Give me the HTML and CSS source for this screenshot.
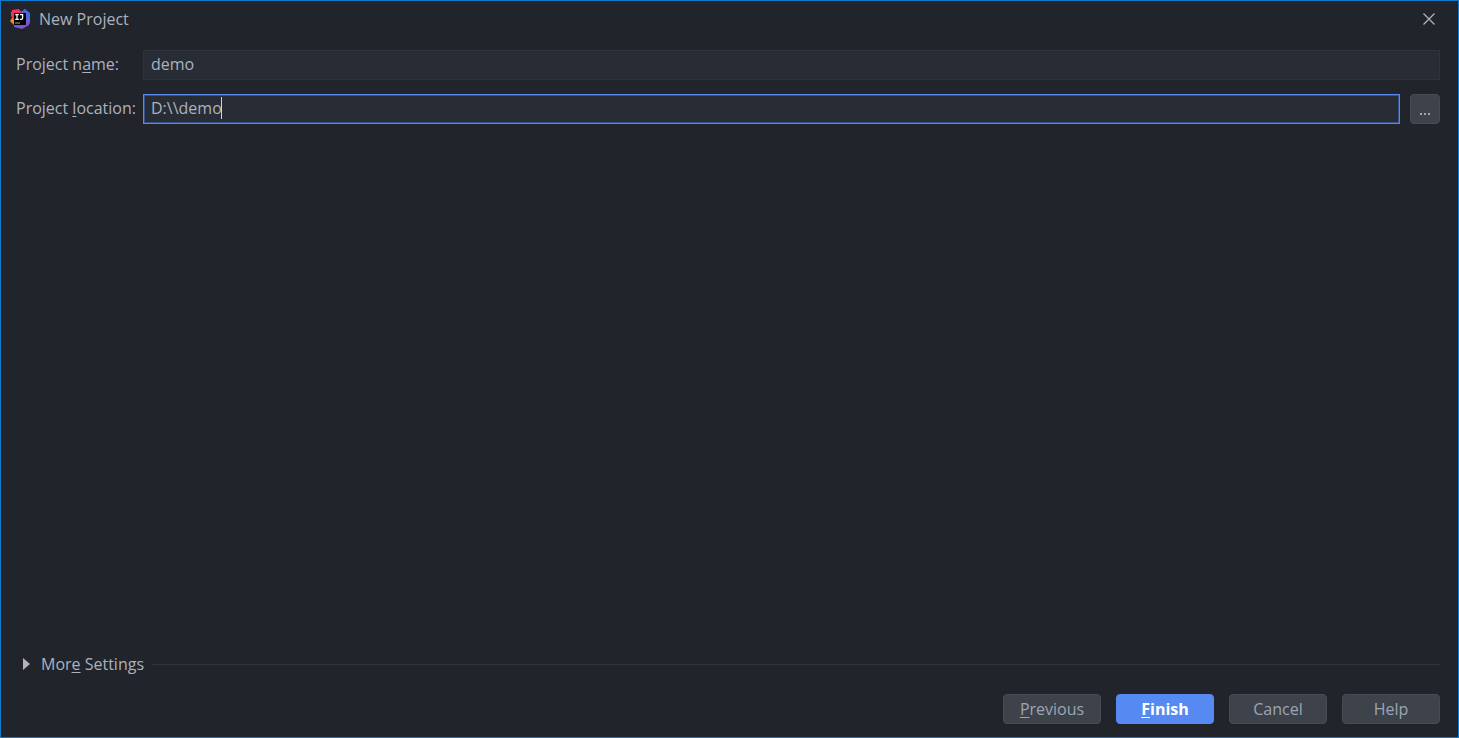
FILE: index.html
```html
<!DOCTYPE html>
<html lang="en">
<head>
    <meta charset="UTF-8">
    <meta name="viewport" content="width=device-width, initial-scale=1.0">
    <title>New Project</title>
    <link rel="stylesheet" href="styles.css">
</head>
<body>
    <div class="dialog">
        <!-- Title bar -->
        <header class="titlebar">
            <svg class="logo" viewBox="0 0 20 20" aria-hidden="true">
                <path d="M1 3 L8 4 L8 15 L5 17 L0 12 L2 9 Z" fill="#f68b2c"/>
                <path d="M2 1 L9 0 L12 4 L9 9 L3 11 L1 6 Z" fill="#f5315d"/>
                <path d="M11 4 L15 0 L20 4 L20 14 L12 19 L6 16 Z" fill="#3b6fe0"/>
                <path d="M16 9 L20 11 L19 16 L12 20 L4 18 L4 15 Z" fill="#7b55d9"/>
                <path d="M9 4 L15 0 L15 5 Z" fill="#7a4fc0"/>
                <rect x="4" y="4" width="12" height="12" fill="#000"/>
                <path d="M5.2 5.7 H8.8 M7 5.7 V10.3 M5.2 10.3 H8.8 M10 5.7 H12.6 V9 Q12.6 10.3 11.2 10.3 H9.8" fill="none" stroke="#fff" stroke-width="1.3"/>
                <path d="M5 14 H10" stroke="#aaa" stroke-width="1"/>
            </svg>
            <h1 class="title">New Project</h1>
            <button class="close" type="button" aria-label="Close">
                <svg viewBox="0 0 12 12" aria-hidden="true">
                    <path d="M0.5 0.5 L11.5 11.5 M11.5 0.5 L0.5 11.5"/>
                </svg>
            </button>
        </header>

        <form class="content">
            <!-- Fields -->
            <div class="row">
                <label class="label" for="projectName">Project n<u>a</u>me:</label>
                <input class="field" id="projectName" type="text" value="demo" spellcheck="false">
            </div>
            <div class="row">
                <label class="label" for="projectLocation">Project <u>l</u>ocation:</label>
                <div class="field-wrap">
                    <input class="field field-active" id="projectLocation" type="text" value="D:\\demo" spellcheck="false">
                    <span class="caret"></span>
                </div>
                <button class="browse" type="button" aria-label="Browse">
                    <svg viewBox="0 0 10 2" aria-hidden="true">
                        <path d="M0 0 H2 V2 H0 Z M4 0 H6 V2 H4 Z M8 0 H10 V2 H8 Z"/>
                    </svg>
                </button>
            </div>

            <!-- Collapsed section -->
            <button class="more" type="button" aria-expanded="false">
                <svg class="arrow" viewBox="0 0 7 12" aria-hidden="true">
                    <path d="M0 0 L7 6 L0 12 Z"/>
                </svg>
                <span>Mor<u>e</u> Settings</span>
                <span class="line"></span>
            </button>

            <div class="actions">
                <button class="btn" type="button"><u>P</u>revious</button>
                <button class="btn btn-primary" type="submit"><u>F</u>inish</button>
                <button class="btn" type="button">Cancel</button>
                <button class="btn" type="button">Help</button>
            </div>
        </form>
    </div>
</body>
</html>
```
FILE: styles.css
```css
* {
    box-sizing: border-box;
}

body {
    margin: 0;
    background: #21242b;
    color: #abb2bf;
    font-family: "Open Sans", "Noto Sans", sans-serif;
    font-size: 16px;
    line-height: 22px;
}

input,
button {
    font: inherit;
    color: inherit;
    margin: 0;
}

u {
    text-decoration-thickness: 1px;
    text-underline-offset: 2px;
    text-decoration-skip-ink: none;
}

.dialog {
    display: flex;
    flex-direction: column;
    min-height: 100vh;
    border: 1px solid #0f7bd0;
}

.titlebar {
    display: flex;
    align-items: center;
    height: 36px;
    padding: 0 16px 0 9px;
}

.logo {
    width: 20px;
    height: 20px;
    margin-right: 9px;
}

.title {
    flex: 1;
    margin: 0;
    font-size: 16px;
    font-weight: 400;
}

.close {
    display: flex;
    align-items: center;
    justify-content: center;
    width: 26px;
    height: 26px;
    padding: 0;
    border: none;
    background: none;
}

.close svg {
    width: 12px;
    height: 12px;
    stroke: #b4b6b9;
    stroke-width: 1.2;
}

.content {
    flex: 1;
    display: flex;
    flex-direction: column;
    padding: 13px 18px 13px 15px;
}

.row {
    display: flex;
    align-items: center;
    margin-bottom: 14px;
}

.label {
    width: 127px;
    padding-bottom: 2px;
    white-space: nowrap;
}

.field {
    flex: 1;
    width: 100%;
    min-width: 0;
    height: 30px;
    padding: 0 7px 2px;
    background: #282c34;
    border: 1px solid #2f333c;
    border-radius: 0;
    outline: none;
}

.field-wrap {
    position: relative;
    flex: 1;
    display: flex;
}

.field-active {
    border-color: #568af2;
    box-shadow: inset 0 0 0 1px #34528f;
}

.caret {
    position: absolute;
    left: 78px;
    top: 3px;
    width: 1px;
    height: 22px;
    background: #d0d3d8;
}

.browse {
    display: flex;
    align-items: flex-end;
    justify-content: center;
    width: 30px;
    height: 30px;
    margin-left: 10px;
    padding: 0 0 8px;
    background: #3d424b;
    border: 1px solid #464b55;
    border-radius: 4px;
}

.browse svg {
    width: 10px;
    height: 2px;
    fill: #9da5b4;
}

.more {
    display: flex;
    align-items: center;
    margin-top: auto;
    margin-bottom: 19px;
    padding: 0 0 0 7px;
    border: none;
    background: none;
    text-align: left;
}

.arrow {
    width: 7px;
    height: 12px;
    margin-right: 11px;
    fill: #b0b2b5;
}

.line {
    flex: 1;
    height: 1px;
    margin-left: 8px;
    background: #30343d;
}

.actions {
    display: flex;
    justify-content: flex-end;
    gap: 15px;
}

.btn {
    width: 98px;
    height: 30px;
    padding: 0;
    background: #3d424b;
    border: 1px solid #464b55;
    border-radius: 4px;
    color: #9da5b4;
}

.btn-primary {
    background: #568af2;
    border-color: #568af2;
    color: #fff;
    font-weight: 700;
}
```
